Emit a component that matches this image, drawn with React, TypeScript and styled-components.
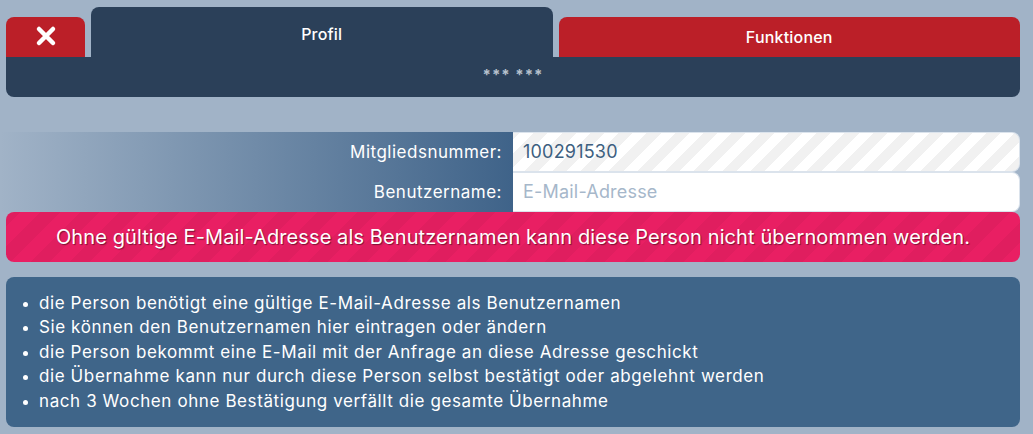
import styled, { createGlobalStyle } from "styled-components";

const GlobalStyle = createGlobalStyle`
  body {
    margin: 0;
    background: #a1b3c7;
    font-family: Inter, "Liberation Sans", sans-serif;
  }
`;

const Page = styled.div`
  padding: 7px 13px 7px 6px;
`;

// Kopfzeile mit den drei Reitern
const TabRow = styled.div`
  display: flex;
  align-items: flex-end;
  gap: 6px;
  height: 50px;
`;

const Tab = styled.div<{ $tone: "red" | "dark"; $tall?: boolean }>`
  flex: 1;
  height: ${(p) => (p.$tall ? "50px" : "40px")};
  background: ${(p) => (p.$tone === "red" ? "#bb1f28" : "#2b4059")};
  border-radius: 8px 8px 0 0;
  color: #fff;
  font-size: 16px;
  font-weight: 500;
  letter-spacing: 0.2px;
  display: flex;
  justify-content: center;
  align-items: flex-start;
  padding-top: ${(p) => (p.$tall ? "17px" : "10px")};
  line-height: 20px;
  box-sizing: border-box;
`;

const CloseTab = styled(Tab)`
  flex: 0 0 79px;
  padding-top: 8px;
`;

const SubBar = styled.div`
  height: 40px;
  background: #2b4059;
  border-radius: 0 0 8px 8px;
  color: #b7c1cd;
  font-size: 15px;
  font-weight: 700;
  text-align: center;
  line-height: 36px;
  letter-spacing: 1px;
`;

const Form = styled.div`
  margin: 35px 0 0 -6px;
  display: grid;
  grid-template-columns: 513px 1fr;
  background: linear-gradient(to right, rgba(63, 99, 137, 0) 0%, #3f6389 100%);
  background-size: 513px 100%;
  background-repeat: no-repeat;
`;

const Label = styled.div`
  height: 40px;
  line-height: 40px;
  text-align: right;
  padding-right: 11px;
  color: #fff;
  font-size: 17px;
  letter-spacing: 0.5px;
`;

const Field = styled.div<{ $readonly?: boolean }>`
  height: 40px;
  box-sizing: border-box;
  border: 1px solid #dbe3ec;
  border-left: none;
  border-radius: 0 8px 8px 0;
  padding-left: 10px;
  line-height: 38px;
  font-size: 18px;
  letter-spacing: 0.2px;
  color: ${(p) => (p.$readonly ? "#3d5f80" : "#a6b7ca")};
  background: ${(p) =>
    p.$readonly
      ? "repeating-linear-gradient(-45deg, #f1f1f1 0 10px, #ffffff 10px 20px)"
      : "#ffffff"};
`;

const ErrorBanner = styled.div`
  height: 50px;
  border-radius: 8px;
  background: repeating-linear-gradient(
    -45deg,
    #e91f63 0 14px,
    #e01e5f 14px 28px
  );
  color: #fff;
  font-size: 20px;
  letter-spacing: 0.1px;
  text-align: center;
  line-height: 50px;
  text-shadow: 1px 1px 1px rgba(0, 0, 0, 0.45);
`;

const InfoBox = styled.div`
  margin-top: 15px;
  height: 150px;
  box-sizing: border-box;
  background: #3f6589;
  border-radius: 8px;
  padding: 14px 10px 0 33px;
`;

const InfoList = styled.ul`
  margin: 0;
  padding: 0;
  color: #fff;
  font-size: 17px;
  letter-spacing: 0.6px;
  line-height: 24.4px;

  li::marker {
    font-size: 14px;
  }
`;

const CloseIcon = () => (
  <svg width="22" height="22" viewBox="0 0 22 22">
    <path d="M4 4 L18 18 M18 4 L4 18" stroke="#fff" strokeWidth="4.5" strokeLinecap="round" />
  </svg>
);

const hinweise = [
  "die Person benötigt eine gültige E-Mail-Adresse als Benutzernamen",
  "Sie können den Benutzernamen hier eintragen oder ändern",
  "die Person bekommt eine E-Mail mit der Anfrage an diese Adresse geschickt",
  "die Übernahme kann nur durch diese Person selbst bestätigt oder abgelehnt werden",
  "nach 3 Wochen ohne Bestätigung verfällt die gesamte Übernahme",
];

export default function App() {
  return (
    <Page>
      <GlobalStyle />
      <TabRow>
        <CloseTab $tone="red">
          <CloseIcon />
        </CloseTab>
        <Tab $tone="dark" $tall>
          Profil
        </Tab>
        <Tab $tone="red">Funktionen</Tab>
      </TabRow>
      <SubBar>*** ***</SubBar>

      <Form>
        <Label>Mitgliedsnummer:</Label>
        <Field $readonly>100291530</Field>
        <Label>Benutzername:</Label>
        <Field>E-Mail-Adresse</Field>
      </Form>
      <ErrorBanner>
        Ohne gültige E-Mail-Adresse als Benutzernamen kann diese Person nicht übernommen werden.
      </ErrorBanner>

      <InfoBox>
        <InfoList>
          {hinweise.map((h) => (
            <li key={h}>{h}</li>
          ))}
        </InfoList>
      </InfoBox>
    </Page>
  );
}
